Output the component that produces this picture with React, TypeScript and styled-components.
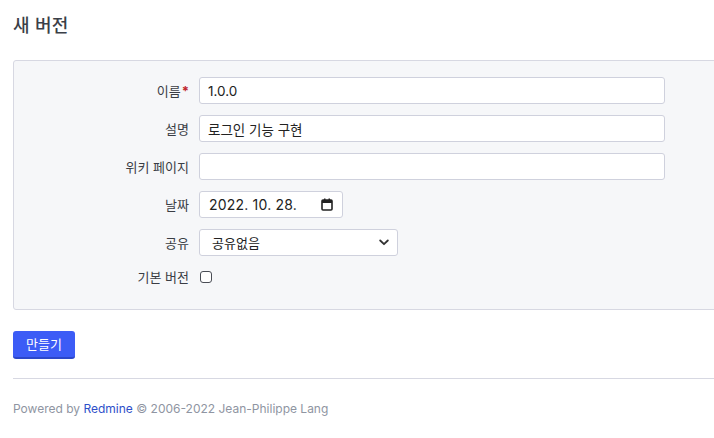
import React from "react";
import styled, { createGlobalStyle } from "styled-components";

const GlobalStyle = createGlobalStyle`
  html, body { margin: 0; padding: 0; background: #fff; overflow: hidden; }
  body {
    font-family: Inter, "Noto Sans CJK KR", "Noto Sans", sans-serif;
    font-size: 13px;
    color: #333;
  }
`;

const Page = styled.div`
  width: 740px;
  padding: 12px 0 0 13px;
  box-sizing: border-box;
`;

const Title = styled.h2`
  margin: 0 0 21px;
  font-size: 18px;
  line-height: 27px;
  font-weight: 500;
  letter-spacing: 0.3px;
  color: #3b3f48;
`;

const Box = styled.div`
  background: #f6f7f9;
  border: 1px solid #d7d8e2;
  border-radius: 3px;
  padding: 16px 0 22px;
  display: grid;
  grid-template-columns: 175px auto;
  column-gap: 10px;
  row-gap: 11px;
  align-items: center;
`;

const Label = styled.label`
  text-align: right;
  color: #3a3d44;
  font-size: 13px;
  line-height: 16px;
`;

const Req = styled.span`
  color: #c0262d;
  font-weight: 700;
  margin-left: 1px;
`;

const Field = styled.div<{ $w?: number }>`
  position: relative;
  width: ${(p) => (p.$w ? `${p.$w}px` : "466px")};
  height: 27px;
`;

const TextInput = styled.input`
  width: 100%;
  height: 100%;
  box-sizing: border-box;
  border: 1px solid #cfd1dd;
  border-radius: 3px;
  background: #fff;
  padding: 0 8px;
  font-family: inherit;
  font-size: 13.5px;
  color: #222;
  outline: none;
`;

const DateInput = styled(TextInput)`
  padding-left: 9px;
  font-size: 14px;
  letter-spacing: 0.2px;
`;

const Icon = styled.span`
  position: absolute;
  top: 0;
  bottom: 0;
  display: flex;
  align-items: center;
  pointer-events: none;
`;

const CalIcon = styled(Icon)`
  right: 10px;
`;

const ChevIcon = styled(Icon)`
  right: 9px;
`;

const Select = styled.select`
  width: 100%;
  height: 100%;
  box-sizing: border-box;
  appearance: none;
  border: 1px solid #cfd1dd;
  border-radius: 3px;
  background: #fff;
  padding: 0 12px;
  font-family: inherit;
  font-size: 13px;
  color: #222;
  outline: none;
`;

const CheckRow = styled.div`
  height: 20px;
  display: flex;
  align-items: center;
`;

const Check = styled.input`
  appearance: none;
  margin: 0 0 0 1px;
  width: 12px;
  height: 12px;
  border: 1px solid #4a4d55;
  border-radius: 3px;
  background: #fff;
`;

const Button = styled.button`
  margin-top: 21px;
  height: 28px;
  padding: 0 13px;
  border: none;
  border-bottom: 2px solid #2c47c9;
  border-radius: 3px;
  background: #3c5cf6;
  color: #fff;
  font-family: inherit;
  font-size: 13px;
  line-height: 26px;
`;

const Rule = styled.hr`
  margin: 19px 0 0;
  border: none;
  border-top: 1px solid #d7d8e2;
`;

const Footer = styled.p`
  margin: 0;
  padding-top: 22px;
  font-size: 12px;
  color: #8f95a2;
`;

const Link = styled.a`
  color: #2e4fc9;
  text-decoration: none;
`;

export default function App() {
  return (
    <>
      <GlobalStyle />
      <Page>
        <Title>새 버전</Title>
        <Box>
          <Label>
            이름<Req>*</Req>
          </Label>
          <Field>
            <TextInput defaultValue="1.0.0" />
          </Field>
          <Label>설명</Label>
          <Field>
            <TextInput defaultValue="로그인 기능 구현" />
          </Field>
          <Label>위키 페이지</Label>
          <Field>
            <TextInput defaultValue="" />
          </Field>
          <Label>날짜</Label>
          <Field $w={144}>
            <DateInput defaultValue="2022. 10. 28." />
            <CalIcon>
              <svg width="12" height="13" viewBox="0 0 12 13">
                <rect x="1" y="2" width="10" height="10" rx="1" fill="none" stroke="#222" strokeWidth="1.6" />
                <rect x="1" y="2" width="10" height="3" fill="#222" />
                <rect x="3" y="0.5" width="1.5" height="2.5" fill="#222" />
                <rect x="7.5" y="0.5" width="1.5" height="2.5" fill="#222" />
              </svg>
            </CalIcon>
          </Field>
          <Label>공유</Label>
          <Field $w={199}>
            <Select defaultValue="none">
              <option value="none">공유없음</option>
            </Select>
            <ChevIcon>
              <svg width="10" height="7" viewBox="0 0 10 7">
                <path d="M1.2 1.5 L5 5.2 L8.8 1.5" fill="none" stroke="#333" strokeWidth="1.8" strokeLinecap="round" strokeLinejoin="round" />
              </svg>
            </ChevIcon>
          </Field>
          <Label>기본 버전</Label>
          <CheckRow>
            <Check type="checkbox" />
          </CheckRow>
        </Box>
        <Button>만들기</Button>
        <Rule />
        <Footer>
          Powered by <Link href="#">Redmine</Link> © 2006-2022 Jean-Philippe Lang
        </Footer>
      </Page>
    </>
  );
}
